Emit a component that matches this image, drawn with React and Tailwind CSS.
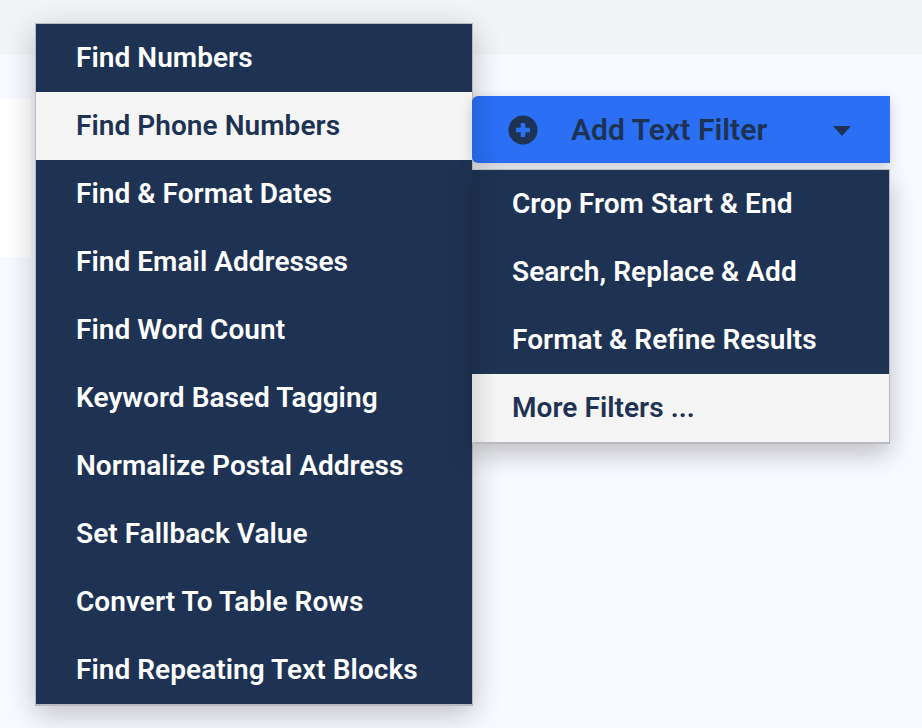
import React from "react";

const mainItems = [
  "Find Numbers",
  "Find Phone Numbers",
  "Find & Format Dates",
  "Find Email Addresses",
  "Find Word Count",
  "Keyword Based Tagging",
  "Normalize Postal Address",
  "Set Fallback Value",
  "Convert To Table Rows",
  "Find Repeating Text Blocks",
];
const subItems = ["Crop From Start & End", "Search, Replace & Add", "Format & Refine Results", "More Filters ..."];

function Row({ label, active }) {
  return (
    <div className={`flex h-[68px] items-center pl-[40px] ${active ? "bg-[#f5f5f5] text-[#1e3354]" : "text-white"}`}>
      {label}
    </div>
  );
}

function EdgeShade() {
  return <div className="absolute inset-y-0 left-0 w-[24px] bg-gradient-to-r from-black/10 to-transparent" />;
}

export default function App() {
  return (
    <div className="relative h-[728px] w-[922px] overflow-hidden bg-[#f9faff] font-['Roboto',sans-serif] text-[28px] font-semibold tracking-[0.05px]">
      <div className="h-[55px] bg-[#f3f4f8]" />
      <div className="mt-[44px] h-[158px] w-[31px] bg-white" />

      <div className="absolute left-[35px] top-[23px] w-[438px] border border-b-2 border-[#b8babf] bg-[#1e3354] shadow-[0_8px_28px_rgba(0,0,0,0.24)]">
        {mainItems.map((t, i) => (
          <Row key={t} label={t} active={i === 1} />
        ))}
      </div>

      <div className="absolute left-[472px] top-[96px] flex w-[418px] flex-col gap-[6px]">
        <div className="relative flex h-[67px] items-center overflow-hidden rounded-l-md bg-[#2b6ff5] pl-[36px] text-[#1e3354] shadow-[0_4px_14px_rgba(0,0,0,0.18)]">
          <EdgeShade />
          <svg className="h-[30px] w-[30px]" viewBox="0 0 30 30">
            <circle cx="15" cy="15" r="14.5" fill="#1e3354" />
            <path d="M15 8v14M8 15h14" stroke="#2b6ff5" strokeWidth="4.6" />
          </svg>
          <span className="ml-[33px] text-[30px]">Add Text Filter</span>
          <svg className="ml-[66px] mt-[2px] h-[12px] w-[18px]" viewBox="0 0 18 12">
            <path d="M0 1h18L9 11z" fill="#1e3354" />
          </svg>
        </div>

        <div className="relative border-t border-r border-b-2 border-[#b8babf] bg-[#1e3354] shadow-[0_10px_24px_rgba(0,0,0,0.24)]">
          {subItems.map((t, i) => (
            <Row key={t} label={t} active={i === 3} />
          ))}
          <EdgeShade />
        </div>
      </div>
    </div>
  );
}
